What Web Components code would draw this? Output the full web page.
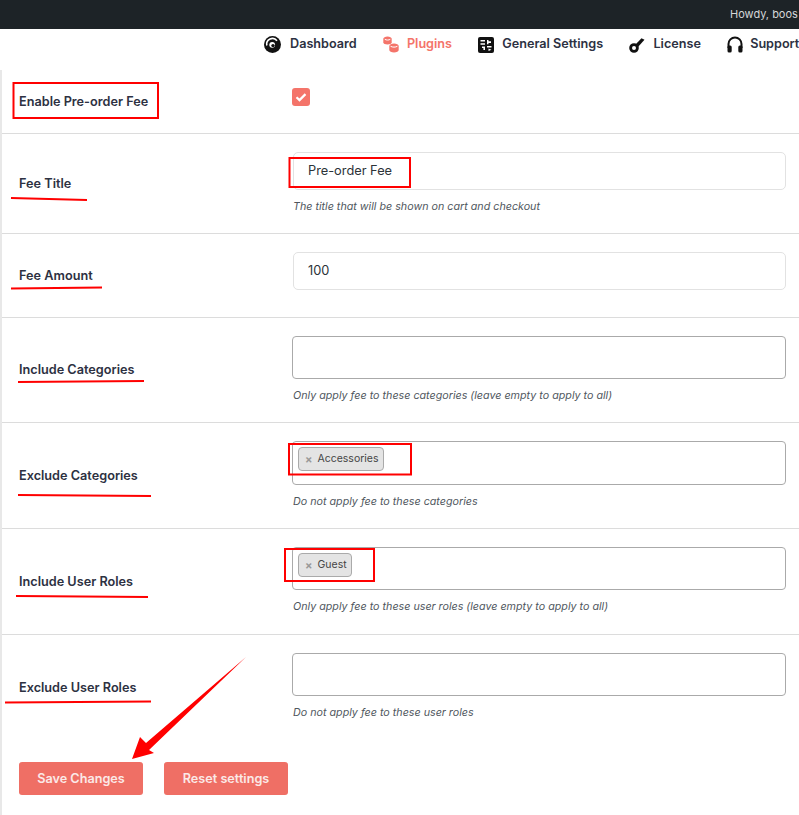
<!DOCTYPE html>
<html>
<head>
<meta charset="utf-8">
<title>Pre-order Fee</title>
<style>
	html, body { margin: 0; height: 815px; overflow: hidden; background: #fff; }
	body { font-family: Inter, "Liberation Sans", sans-serif; position: relative; }
	main { display: block; border-left: 2px solid #e8e8e8; width: 799px; height: 745px; box-sizing: border-box; }
</style>
</head>
<body>
<admin-bar>Howdy, boos</admin-bar>
<plugin-nav>
	<nav-item icon="dashboard">Dashboard</nav-item>
	<nav-item icon="plugins" active>Plugins</nav-item>
	<nav-item icon="settings">General Settings</nav-item>
	<nav-item icon="license">License</nav-item>
	<nav-item icon="support">Support</nav-item>
</plugin-nav>
<main>
	<settings-row label="Enable Pre-order Fee" style="height:63px;--nudge:1px"><check-mark></check-mark></settings-row>
	<settings-row label="Fee Title" desc="The title that will be shown on cart and checkout" style="height:99px"><text-field>Pre-order Fee</text-field></settings-row>
	<settings-row label="Fee Amount" style="height:83px"><text-field>100</text-field></settings-row>
	<settings-row label="Include Categories" desc="Only apply fee to these categories (leave empty to apply to all)" style="height:104px"><select-box></select-box></settings-row>
	<settings-row label="Exclude Categories" desc="Do not apply fee to these categories" style="height:105px"><select-box style="height:44px"><tag-chip>Accessories</tag-chip></select-box></settings-row>
	<settings-row label="Include User Roles" desc="Only apply fee to these user roles (leave empty to apply to all)" style="height:105px"><select-box><tag-chip>Guest</tag-chip></select-box></settings-row>
	<settings-row label="Exclude User Roles" desc="Do not apply fee to these user roles" last style="height:105px"><select-box></select-box></settings-row>
	<button-bar>
		<red-button>Save Changes</red-button>
		<red-button>Reset settings</red-button>
	</button-bar>
</main>
<mark-up></mark-up>

<script>
const ICONS = {
	dashboard: `<svg viewBox="0 0 17 17" width="17" height="17" style="margin-right:1px"><circle cx="8.5" cy="8.5" r="8.5" fill="#111"/><path d="M2.800 9.500a5.800 5.800 0 0 1 10.200-4.800" fill="none" stroke="#fff" stroke-width="1.600"/><circle cx="8.200" cy="8.800" r="2.900" fill="#fff"/><circle cx="9" cy="9.600" r="1.700" fill="#111"/></svg>`,
	plugins: `<svg viewBox="0 0 16 17" width="16" height="17" fill="#f4746a"><path d="M4.500.5c2.300 0 4.200 1 4.200 2.300v3.400C8.700 7.500 6.800 8.500 4.500 8.500S.3 7.500.3 6.200V2.800C.3 1.500 2.200.5 4.500.5z"/><path d="M11 7.500c2.500 0 4.700 1.100 4.700 2.500v4c0 1.400-2.200 2.500-4.700 2.500s-4.700-1.100-4.700-2.500v-4c0-1.400 2.200-2.500 4.700-2.500z"/><path d="M1.800 3.300c1.500 1 4 1 5.500 0M7.600 10.300c1.800 1.100 5 1.100 6.800 0" fill="none" stroke="#fff" stroke-width="1"/></svg>`,
	settings: `<svg viewBox="0 0 16 16" width="16" height="16"><rect width="16" height="16" rx="2" fill="#111"/><path d="M2.500 3h4.500v1.600H2.500zM2.500 6.200h4.500v1.600H2.500zM4 9.400h3V13H5.400V11H4zM9 3h1.500v1.300H13V6h-2.500v1.300H9zM9 9h4.500v1.600H9zM10.500 11.500v2.500L13.500 12.800z" fill="#fff"/></svg>`,
	license: `<svg viewBox="0 0 16 17" width="16" height="17"><circle cx="5" cy="12" r="3.400" fill="none" stroke="#111" stroke-width="2.800"/><path d="M6 9L12.500 2.200 15.500 3.800 8.500 11.500z" fill="#111"/></svg>`,
	support: `<svg viewBox="0 0 16 17" width="16" height="17" style="margin-right:-1px"><path d="M1.500 12V8a6.500 6.500 0 0 1 13 0v4" fill="none" stroke="#111" stroke-width="2"/><rect x=".5" y="9.500" width="4.200" height="7" rx="1.500" fill="#111"/><rect x="11.300" y="9.500" width="4.200" height="7" rx="1.500" fill="#111"/></svg>`
};

class AdminBar extends HTMLElement {
	constructor() {
		super();
		this.attachShadow({mode: "open"}).innerHTML = `
		<style>
			:host { display: block; height: 29px; background: #1d2327; color: #d5d7d9; font: 400 11px/29px Inter, "Liberation Sans", sans-serif; padding-left: 730px; white-space: nowrap; box-sizing: border-box; }
		</style>
		<slot></slot>`;
	}
}

class PluginNav extends HTMLElement {
	constructor() {
		super();
		this.attachShadow({mode: "open"}).innerHTML = `
		<style>
			:host { display: flex; align-items: center; gap: 26.250px; height: 41px; box-sizing: border-box; padding: 6px 0 18px 264px; }
		</style>
		<slot></slot>`;
	}
}

class NavItem extends HTMLElement {
	constructor() {
		super();
		const color = this.hasAttribute("active") ? "#f4746a" : "#2d3142";
		this.attachShadow({mode: "open"}).innerHTML = `
		<style>
			:host { display: flex; align-items: center; gap: 8px; flex: none; white-space: nowrap; color: ${color}; font: 600 12.650px/17px Inter, "Liberation Sans", sans-serif; }
			svg { display: block; flex: none; margin-top: 2px; }
		</style>
		${ICONS[this.getAttribute("icon")]}<slot></slot>`;
	}
}

class SettingsRow extends HTMLElement {
	constructor() {
		super();
		const desc = this.getAttribute("desc");
		this.attachShadow({mode: "open"}).innerHTML = `
		<style>
			:host { display: grid; grid-template-columns: 290px 494px; border-bottom: 1px solid #dcdcdc; }
			:host([last]) { border-bottom: 0; }
			#label { align-self: center; padding: var(--nudge, 0) 0 0 17px; color: #2d3142; font: 600 12.700px/16px Inter, "Liberation Sans", sans-serif; }
			#field { padding-top: 18px; }
			#desc { margin: 9px 0 0 1px; color: #50575e; font: italic 400 10.720px/16px Inter, "Liberation Sans", sans-serif; white-space: nowrap; }
		</style>
		<div id="label">${this.getAttribute("label")}</div>
		<div id="field"><slot></slot>${desc ? `<div id="desc">${desc}</div>` : ""}</div>`;
	}
}

class CheckMark extends HTMLElement {
	constructor() {
		super();
		this.attachShadow({mode: "open"}).innerHTML = `
		<style>
			:host { display: block; width: 18px; height: 18px; background: #f4746a; border-radius: 3px; }
			svg { display: block; }
		</style>
		<svg viewBox="0 0 18 18" width="18" height="18"><path d="M4.500 9.300l3 2.800 6-6" fill="none" stroke="#fff" stroke-width="2.200"/></svg>`;
	}
}

class TextField extends HTMLElement {
	constructor() {
		super();
		this.attachShadow({mode: "open"}).innerHTML = `
		<style>
			:host { display: block; height: 38px; margin-left: 1px; padding-left: 14px; box-sizing: border-box; border: 1px solid #e2e2e2; border-radius: 5px; color: #2c3338; font: 400 12.800px/36px Inter, "Liberation Sans", sans-serif; }
		</style>
		<slot></slot>`;
	}
}

class SelectBox extends HTMLElement {
	constructor() {
		super();
		this.attachShadow({mode: "open"}).innerHTML = `
		<style>
			:host { display: flex; align-items: flex-start; height: 43px; padding: 5px; box-sizing: border-box; border: 1px solid #aaa; border-radius: 4px; }
		</style>
		<slot></slot>`;
	}
}

class TagChip extends HTMLElement {
	constructor() {
		super();
		this.attachShadow({mode: "open"}).innerHTML = `
		<style>
			:host { display: inline-flex; align-items: center; gap: 5px; height: 24px; padding: 0 4px 0 6px; box-sizing: border-box; background: #e4e4e4; border: 1px solid #aaa; border-radius: 4px; color: #444; font: 400 10.500px/24px Inter, "Liberation Sans", sans-serif; white-space: nowrap; }
			b { color: #999; font-size: 11px; line-height: 22px; }
		</style>
		<b>×</b><slot></slot>`;
	}
}

class ButtonBar extends HTMLElement {
	constructor() {
		super();
		this.attachShadow({mode: "open"}).innerHTML = `
		<style>
			:host { display: flex; gap: 21px; padding: 22px 0 0 17px; }
		</style>
		<slot></slot>`;
	}
}

class RedButton extends HTMLElement {
	constructor() {
		super();
		this.attachShadow({mode: "open"}).innerHTML = `
		<style>
			:host { display: block; width: 124px; height: 33px; background: #ef6f65; border-radius: 3px; color: #fbe9e7; text-align: center; font: 600 12.650px/33px Inter, "Liberation Sans", sans-serif; }
		</style>
		<slot></slot>`;
	}
}

// the red marks someone drew over the screenshot
class MarkUp extends HTMLElement {
	constructor() {
		super();
		this.attachShadow({mode: "open"}).innerHTML = `
		<style>
			:host { display: block; position: absolute; inset: 0; pointer-events: none; }
			svg { display: block; }
			rect, line { fill: none; stroke: #f00; stroke-width: 2; }
		</style>
		<svg width="799" height="815" viewBox="0 0 799 815">
			<rect x="13.500" y="83" width="144.500" height="35"/>
			<rect x="289.500" y="158" width="120.500" height="29"/>
			<rect x="289" y="444" width="122" height="30.500"/>
			<rect x="285" y="549" width="89" height="32"/>
			<line x1="11" y1="198" x2="87" y2="200"/>
			<line x1="11" y1="288.500" x2="102" y2="287.500"/>
			<line x1="18" y1="382" x2="144" y2="381"/>
			<line x1="18" y1="495" x2="151" y2="496"/>
			<line x1="16" y1="596" x2="148" y2="597"/>
			<line x1="5" y1="702.500" x2="151" y2="701.500"/>
			<polygon points="246,657 146,743 140,737 132,759 154,753 149,750" fill="#f00"/>
		</svg>`;
	}
}

customElements.define("admin-bar", AdminBar);
customElements.define("plugin-nav", PluginNav);
customElements.define("nav-item", NavItem);
customElements.define("settings-row", SettingsRow);
customElements.define("check-mark", CheckMark);
customElements.define("text-field", TextField);
customElements.define("select-box", SelectBox);
customElements.define("tag-chip", TagChip);
customElements.define("button-bar", ButtonBar);
customElements.define("red-button", RedButton);
customElements.define("mark-up", MarkUp);
</script>
</body>
</html>
